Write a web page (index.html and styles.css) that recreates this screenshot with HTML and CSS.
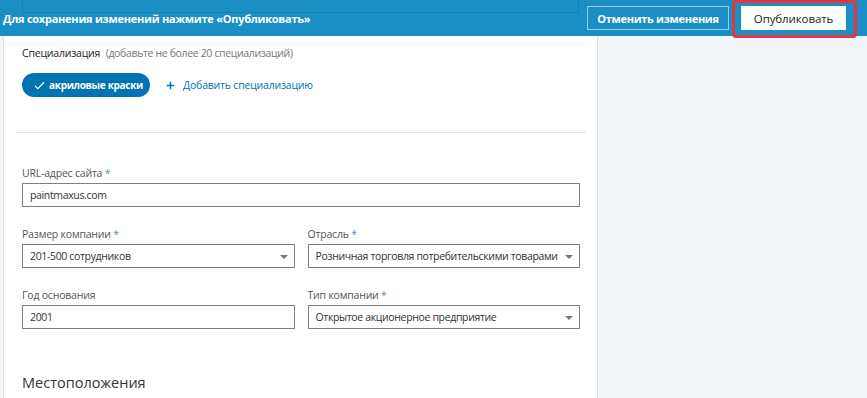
FILE: index.html
```html
<!DOCTYPE html>
<html lang="ru">
<head>
  <meta charset="UTF-8" />
  <title>Редактирование страницы компании</title>
  <link rel="stylesheet" href="styles.css">
</head>
<body>
  <div class="banner" role="region" aria-label="Публикация">
    <div class="ghost" aria-hidden="true"></div>
    <span class="banner-text">Для сохранения изменений нажмите «Опубликовать»</span>
    <button class="btn-cancel">Отменить изменения</button>
    <div class="highlight">
      <button class="btn-publish">Опубликовать</button>
    </div>
  </div>

  <div class="layout">
    <div class="main">
      <div class="spec">
        <div class="spec-title">Специализация <span class="hint">(добавьте не более 20 специализаций)</span></div>
        <div class="spec-row">
          <span class="pill">
            <svg viewBox="0 0 16 16" aria-hidden="true">
              <path d="M2.5 8.5l3.5 3.5 7.5-8" />
            </svg>
            акриловые краски
          </span>
          <a class="add-link" href="#">
            <svg viewBox="0 0 12 12" aria-hidden="true">
              <path d="M6 1v10M1 6h10" />
            </svg>
            Добавить специализацию
          </a>
        </div>
      </div>

      <hr class="divider" />

      <div class="form">
        <div class="field">
          <label for="site">URL-адрес сайта <span class="req">*</span></label>
          <input id="site" type="text" value="paintmaxus.com" />
        </div>

        <div class="row">
          <div class="field">
            <label>Размер компании <span class="req">*</span></label>
            <div class="select">201-500 сотрудников<i class="caret"></i></div>
          </div>
          <div class="field">
            <label>Отрасль <span class="req">*</span></label>
            <div class="select">Розничная торговля потребительскими товарами<i class="caret"></i></div>
          </div>
        </div>

        <div class="row">
          <div class="field">
            <label for="year">Год основания</label>
            <input id="year" type="text" value="2001" />
          </div>
          <div class="field">
            <label>Тип компании <span class="req">*</span></label>
            <div class="select">Открытое акционерное предприятие<i class="caret"></i></div>
          </div>
        </div>

        <h2 class="section-title">Местоположения</h2>
      </div>
    </div>
    <div class="aside"></div>
  </div>
</body>
</html>
```

FILE: styles.css
```css
*, *::before, *::after {
  box-sizing: border-box;
}
body {
  margin: 0;
  font-family: 'Open Sans', 'Noto Sans', sans-serif;
  font-size: 10.5px;
  letter-spacing: -0.2px;
  background: #f3f6f8;
  color: #333;
  width: 867px;
  height: 398px;
  overflow: hidden;
}


.banner {
  position: relative;
  height: 36px;
  background: #1a8fc5;
  display: flex;
  align-items: center;
  padding-left: 3px;
}
.ghost {
  position: absolute;
  left: 22px;
  top: -1px;
  width: 557px;
  height: 14px;
  border: 1px solid rgba(0, 60, 110, 0.18);
}
.banner-text {
  color: #fff;
  font-weight: 700;
  font-size: 11px;
  letter-spacing: -0.25px;
  flex: 1;
}
.btn-cancel {
  height: 24px;
  width: 142px;
  border: 1px solid rgba(255, 255, 255, 0.55);
  background: transparent;
  color: #fff;
  font-family: inherit;
  font-weight: 700;
  font-size: 11px;
  letter-spacing: -0.3px;
  padding: 0;
}
.highlight {
  align-self: flex-start;
  margin: 0 10px 0 3px;
  height: 38px;
  width: 125px;
  border: 3px solid #e5353f;
  border-radius: 4px;
  padding: 3px 0 0 6px;
}
.btn-publish {
  height: 24px;
  width: 105px;
  border: none;
  background: #fff;
  color: #222;
  font-family: inherit;
  font-weight: 500;
  font-size: 11.5px;
  letter-spacing: -0.1px;
  padding: 0;
}


.layout {
  display: flex;
  height: 362px;
}
.main {
  width: 595px;
  margin-left: 3px;
  background: #fff;
  border-left: 1px solid #dde2e6;
  border-right: 1px solid #dde2e6;
  padding: 0 11px 0 12px;
}
.aside {
  flex: 1;
}


.spec {
  padding: 9px 6px 0;
}
.spec-title {
  line-height: 17px;
  color: #222;
}
.hint {
  color: #777;
  margin-left: 3px;
  letter-spacing: -0.35px;
}
.spec-row {
  margin-top: 11px;
  display: flex;
  align-items: center;
  gap: 16px;
}
.pill {
  display: inline-flex;
  align-items: center;
  gap: 3px;
  height: 24px;
  padding: 0 7px 0 11px;
  background: #0073b1;
  color: #fff;
  border-radius: 12px;
  font-weight: 700;
  font-size: 10px;
  letter-spacing: -0.3px;
}
.pill svg {
  width: 13px;
  height: 13px;
  fill: none;
  stroke: #fff;
  stroke-width: 1.4;
}
.add-link {
  display: inline-flex;
  align-items: center;
  gap: 8px;
  color: #0073b1;
  text-decoration: none;
}
.add-link svg {
  width: 9px;
  height: 9px;
  fill: none;
  stroke: #0073b1;
  stroke-width: 2;
}


.divider {
  margin: 35px 0 0;
  border: none;
  border-top: 1px solid #e3e5e7;
}


.form {
  padding: 32px 6px 0;
}
.row {
  display: flex;
  gap: 13px;
}
.row .field {
  flex: 1 1 0;
  min-width: 0;
}
.field {
  margin-bottom: 19px;
}
.field label {
  display: block;
  line-height: 16px;
  color: #555;
  margin-bottom: 2px;
}
.req {
  color: #5b8fbb;
}
.field input,
.select {
  display: flex;
  align-items: center;
  width: 100%;
  height: 24px;
  border: 1px solid #7f7f7f;
  padding: 0 7px;
  font-family: inherit;
  font-size: 10.5px;
  letter-spacing: -0.35px;
  color: #333;
  background: #fff;
  position: relative;
}
.select {
  padding-right: 22px;
  white-space: nowrap;
  overflow: hidden;
}
.caret {
  position: absolute;
  right: 6px;
  top: 10px;
  border-left: 4px solid transparent;
  border-right: 4px solid transparent;
  border-top: 4px solid #777;
}


.section-title {
  margin: 24px 0 0;
  font-size: 14.5px;
  line-height: 22px;
  font-weight: 400;
  letter-spacing: 0;
  color: #333;
}
```
